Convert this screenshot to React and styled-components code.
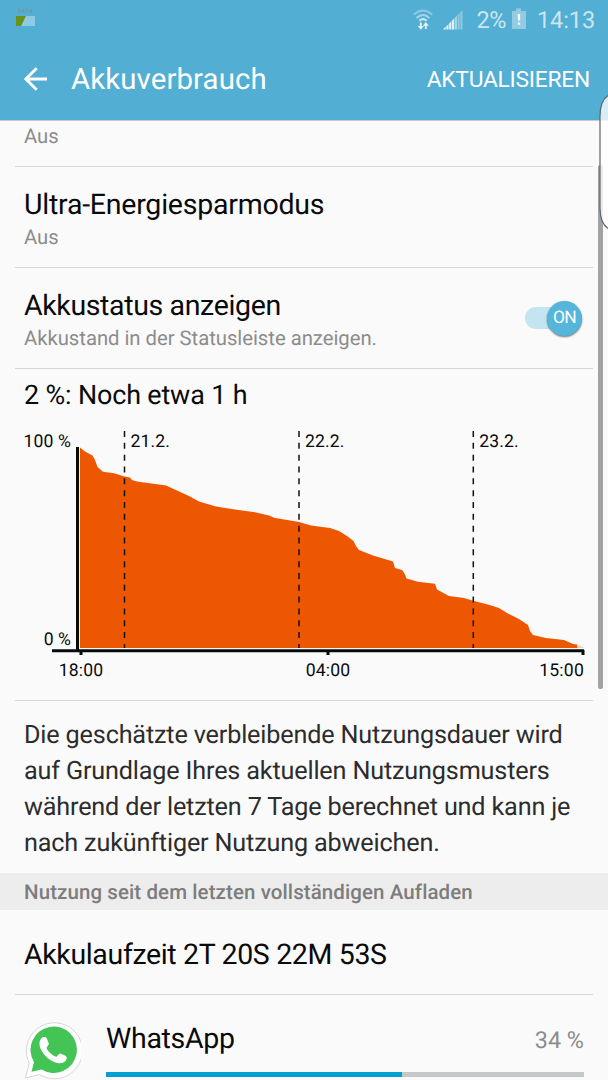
import React from "react";
import styled, { createGlobalStyle } from "styled-components";

const GlobalStyle = createGlobalStyle`
  * { box-sizing: border-box; }
  body {
    margin: 0;
    background: #fafafa;
    font-family: Roboto, "Liberation Sans", sans-serif;
    text-rendering: geometricPrecision;
    overflow: hidden;
  }
`;

const Screen = styled.div`
  position: relative;
  width: 608px;
  height: 1080px;
  overflow: hidden;
  background: #fafafa;
  color: #0a0a0a;
`;

const Header = styled.header`
  height: 121px;
  background: #52aed2;
  border-bottom: 1px solid #c4cfd3;
`;

const StatusBar = styled.div`
  display: flex;
  align-items: center;
  justify-content: space-between;
  height: 39px;
  padding: 0 13px 0 16px;
  color: #cbe6f1;
`;

const StatusGroup = styled.div`
  display: flex;
  align-items: center;
`;

const StatusText = styled.span`
  font-size: 23.5px;
  line-height: 38px;
  letter-spacing: ${({ $spacing }) => $spacing || 0}px;
  margin-left: ${({ $gap }) => $gap || 0}px;
`;

const DataWidget = styled.div`
  display: flex;
  flex-direction: column;
  align-items: center;
  width: 19px;
  margin-top: -5px;
  font-size: 5.5px;
  line-height: 8px;
  letter-spacing: 0.5px;
  color: #7c8f98;
`;

const AppBar = styled.div`
  display: flex;
  align-items: center;
  height: 81px;
  padding: 0 18px 0 23px;
  color: #fff;
`;

const AppTitle = styled.h1`
  flex: 1;
  margin: 0 0 0 23px;
  font-size: 29.4px;
  letter-spacing: 0.1px;
  font-weight: 400;
  line-height: 82px;
`;

const AppAction = styled.button`
  padding: 0;
  border: 0;
  background: none;
  color: inherit;
  font: 400 22.8px/80px Roboto, sans-serif;
  letter-spacing: -0.25px;
`;

const Row = styled.section`
  display: flex;
  align-items: center;
  justify-content: space-between;
  height: ${({ $height }) => $height}px;
  margin: 0 15px;
  padding: 0 11px 0 9px;
  border-bottom: 1px solid #d6d6d6;
`;

const RowText = styled.div`
  display: flex;
  flex-direction: column;
  padding-top: ${({ $offset }) => $offset || 0}px;
`;

const Title = styled.div`
  font-size: ${({ $size }) => $size || 28.5}px;
  letter-spacing: ${({ $spacing }) => $spacing || 0}px;
  line-height: 36px;
  white-space: nowrap;
`;

const Summary = styled.div`
  font-size: 20.3px;
  line-height: 29px;
  letter-spacing: -0.03px;
  color: #8c8c8c;
`;

const ClippedSummary = styled(Summary)`
  margin-top: -15px;
`;

const Toggle = styled.div`
  display: flex;
  align-items: center;
  width: 57px;
  height: 22px;
  border-radius: 11px;
  background: #c3e5f1;
  justify-content: flex-end;
`;

const Knob = styled.div`
  width: 35px;
  height: 35px;
  border-radius: 50%;
  background: #55b5db;
  box-shadow: 0 1px 2px rgba(0, 0, 0, 0.55);
  color: #fff;
  font-size: 17.4px;
  letter-spacing: -0.8px;
  line-height: 35px;
  text-align: center;
`;

const ChartSection = styled.section`
  height: 332px;
  margin: 0 15px;
  padding: 8px 0 0 9px;
  border-bottom: 1px solid #d6d6d6;
`;

const ChartSvg = styled.svg`
  display: block;
  margin-top: 5px;
  font-family: Roboto, sans-serif;
  font-size: 17.6px;
`;

const Paragraph = styled.p`
  height: 172px;
  margin: 0;
  padding: 16.5px 24px 0;
  font-size: 25.2px;
  letter-spacing: -0.16px;
  line-height: 36px;
  color: #2c2c2c;
  white-space: nowrap;
`;

const SectionHeader = styled.h2`
  height: 37px;
  margin: 0;
  padding-left: 24px;
  background: #ededed;
  color: #7d7d7d;
  font-size: 20.5px;
  letter-spacing: 0.09px;
  font-weight: 500;
  line-height: 40px;
`;

const AppRow = styled.div`
  display: flex;
  padding: 25px 24px 0 21px;
`;

const AppUsage = styled.div`
  flex: 1;
  margin-left: 25px;
`;

const UsageHeading = styled.div`
  display: flex;
  align-items: center;
  justify-content: space-between;
  height: 38px;
`;

const Percent = styled.span`
  padding-top: 2px;
  font-size: 23.4px;
  color: #8c8c8c;
`;

const Track = styled.div`
  height: 5px;
  margin-top: 13.5px;
  background: #c5c8c8;
`;

const Bar = styled.div`
  width: ${({ $value }) => $value}%;
  height: 100%;
  background: #069fd2;
`;

const ScrollThumb = styled.div`
  position: absolute;
  top: 165px;
  left: 598px;
  width: 5px;
  height: 524px;
  border-radius: 2px;
  background: #a2a2a5;
`;

const EdgeHandle = styled.svg`
  position: absolute;
  top: 94px;
  left: 598px;
`;

function StatusIcons() {
  return (
    <svg width="50" height="24" viewBox="0 0 50 24" fill="none">
      <g stroke="#cbe6f1" strokeWidth="2">
        <path d="M.8 6.500Q10 -1.500 19.200 6.500" opacity=".5" />
        <path d="M3.500 10Q10 4 16.500 10" opacity=".7" />
        <path d="M6.300 12.800Q10 9.500 13.700 12.800" />
      </g>
      <path d="M7.800 14.500v5.500M12.800 21v-4" stroke="#e6f4f9" strokeWidth="1.800" />
      <path d="M4.800 18h6L7.800 21.800zM9.800 17.800h6L12.800 14z" fill="#e6f4f9" />
      <g fill="#e1f1f7">
        <path d="M30.500 21.500v-1l2.200-1.700v2.700zM33.300 21.500V18.200l2.200-2v5.300zM36.100 21.500V15.500l2.200-2.200v8.200z" />
        <path d="M38.900 21.500V12.700l2.200-2.200v11z" />
        <path d="M41.700 21.500V10l2.200-2.200v13.700z" opacity=".6" />
        <path d="M44.500 21.500V7l2.200-2.200v16.700z" opacity=".4" />
        <path d="M47.300 21.500V4.200L49.500 2v19.500z" opacity=".4" />
      </g>
    </svg>
  );
}

const Battery = styled.svg`
  margin: -2px 0 0 6px;
`;

function BatteryIcon() {
  return (
    <Battery width="14" height="22" viewBox="0 0 14 22">
      <path d="M0 3h4V0.500h5V3h5v18H0z" fill="#93cbe2" />
      <path d="M5.800 6h2.400v6.500H5.800zM5.800 14.500h2.400v2.300H5.800z" fill="#f2fafd" />
    </Battery>
  );
}

function BackArrow() {
  return (
    <svg width="25" height="26" viewBox="0 0 25 26" fill="none" stroke="#fff" strokeWidth="2.900">
      <path d="M24 12H3M13.700 1.200L2.900 12l10.800 10.800" />
    </svg>
  );
}

const LEVELS = [
  [80, 447.5], [85, 451.5], [92.5, 455.5], [95, 460], [97.5, 467], [103, 471.7],
  [114, 473.2], [124.5, 476.5], [130, 477.5], [132, 480], [137, 481.5], [166, 485.5],
  [177, 490.5], [190, 496.5], [199, 501.5], [216, 506.5], [235, 509.5], [255, 512.2],
  [270, 515.7], [274, 517.8], [299, 522], [311, 525.5], [330, 528], [339, 531],
  [347, 536], [353.5, 541], [356, 546], [359, 550], [373, 555.5], [393, 561.5],
  [395, 568], [402, 570], [404.5, 573.5], [406.5, 578.5], [418, 581.7], [435, 583.7],
  [437, 589.5], [449, 596], [464, 598], [474, 601], [488, 604.5], [499, 608],
  [507, 613], [519, 619], [528, 625], [530, 631], [533, 635], [546, 638],
  [564, 640], [573, 644], [577, 644.5],
];
const DAYS = [[124.5, "21.2."], [299, "22.2."], [473.3, "23.2."]];

function BatteryChart() {
  const points = LEVELS.map((p) => p.join(",")).join(" ");
  return (
    <ChartSvg width="568" height="262" viewBox="24 418 568 262">
      <polygon points={`80,648 ${points} 577,648`} fill="#ee5702" />
      <path d="M577 644.500L584 648h-7z" fill="#f8c9af" />
      {DAYS.map(([x, label]) => (
        <g key={label}>
          <path d={`M${x} 431V648`} stroke="#111" strokeWidth="1.500" strokeDasharray="6 5.830" />
          <text x={x + 6} y="447" fill="#0a0a0a" letterSpacing="0.1">{label}</text>
        </g>
      ))}
      <path d="M77.500 447V650M52 650.700H584M81 650V655M328 650V655M583 650V655" stroke="#070b09" strokeWidth="3" fill="none" />
      <g fill="#0a0a0a">
        <text x="71" y="447" textAnchor="end" letterSpacing="0.1">100 %</text>
        <text x="71" y="645" textAnchor="end">0 %</text>
        <text x="81" y="676" textAnchor="middle" letterSpacing="0.1">18:00</text>
        <text x="328" y="676" textAnchor="middle" letterSpacing="0.1">04:00</text>
        <text x="584" y="676" textAnchor="end" letterSpacing="0.2">15:00</text>
      </g>
    </ChartSvg>
  );
}

function WhatsAppIcon() {
  return (
    <svg width="60" height="60" viewBox="0 0 60 60">
      <path d="M4.500 58L8.200 43A28 28 0 1 1 18.500 54.500Z" fill="#fff" stroke="#d6d6d6" strokeWidth="1" />
      <path d="M10.500 51.700L13 42A23.200 23.200 0 1 1 20.500 49.500Z" fill="#45c456" />
      <path d="M18.500 23c0-3 2-5.300 3.400-5.700 1.200-.4 3-.3 3.600.6.700 1.300 1.800 4.100 2.300 5.700.4 1.300-2.200 3.300-2.200 4.400 0 1.400 3.400 5 5.100 6.300 1.600 1.200 3.500 2.400 4.700 2.400 1 0 2.400-3.200 3.700-3.100 1 .1 5 2.100 6.200 2.800.9.600.1 3.500-.9 4.700-1.600 1.800-4.900 2.500-7.200 2.100-5.700-1-9.900-4.200-13.300-8C21.100 31.800 18.100 27.500 18.500 23z" fill="#fff" />
    </svg>
  );
}

export default function App() {
  return (
    <Screen>
      <GlobalStyle />
      <Header>
        <StatusBar>
          <DataWidget>
            DATA
            <svg width="19" height="10" viewBox="0 0 19 10">
              <path d="M0 0h19v10H0z" fill="#8dcae3" />
              <path d="M0 0h10L5 10H0z" fill="#6a901d" />
            </svg>
          </DataWidget>
          <StatusGroup>
            <StatusIcons />
            <StatusText $gap={14} $spacing={-0.5}>2%</StatusText>
            <BatteryIcon />
            <StatusText $gap={11} $spacing={-0.1}>14:13</StatusText>
          </StatusGroup>
        </StatusBar>
        <AppBar>
          <BackArrow />
          <AppTitle>Akkuverbrauch</AppTitle>
          <AppAction>AKTUALISIEREN</AppAction>
        </AppBar>
      </Header>
      <Row $height={46}>
        <ClippedSummary>Aus</ClippedSummary>
      </Row>
      <Row $height={101}>
        <RowText $offset={4}>
          <Title $spacing={-0.23}>Ultra-Energiesparmodus</Title>
          <Summary>Aus</Summary>
        </RowText>
      </Row>
      <Row $height={101}>
        <RowText $offset={4}>
          <Title $spacing={-0.36}>Akkustatus anzeigen</Title>
          <Summary>Akkustand in der Statusleiste anzeigen.</Summary>
        </RowText>
        <Toggle>
          <Knob>ON</Knob>
        </Toggle>
      </Row>
      <ChartSection>
        <Title $size={26.9} $spacing={-0.14}>2 %: Noch etwa 1 h</Title>
        <BatteryChart />
      </ChartSection>
      <Paragraph>
        Die geschätzte verbleibende Nutzungsdauer wird<br />
        auf Grundlage Ihres aktuellen Nutzungsmusters<br />
        während der letzten 7 Tage berechnet und kann je<br />
        nach zukünftiger Nutzung abweichen.
      </Paragraph>
      <SectionHeader>Nutzung seit dem letzten vollständigen Aufladen</SectionHeader>
      <Row $height={85}>
        <RowText $offset={5}>
          <Title $spacing={-0.35}>Akkulaufzeit 2T 20S 22M 53S</Title>
        </RowText>
      </Row>
      <AppRow>
        <WhatsAppIcon />
        <AppUsage>
          <UsageHeading>
            <Title $spacing={-0.3}>WhatsApp</Title>
            <Percent>34 %</Percent>
          </UsageHeading>
          <Track>
            <Bar $value={62} />
          </Track>
        </AppUsage>
      </AppRow>
      <ScrollThumb />
      <EdgeHandle width="10" height="138" viewBox="0 0 10 138">
        <path d="M10 1.500Q2 7 2 22V114Q2 129 10 134.500" fill="#fff" fillOpacity=".78" stroke="#5c666a" strokeWidth="1.200" />
      </EdgeHandle>
    </Screen>
  );
}
